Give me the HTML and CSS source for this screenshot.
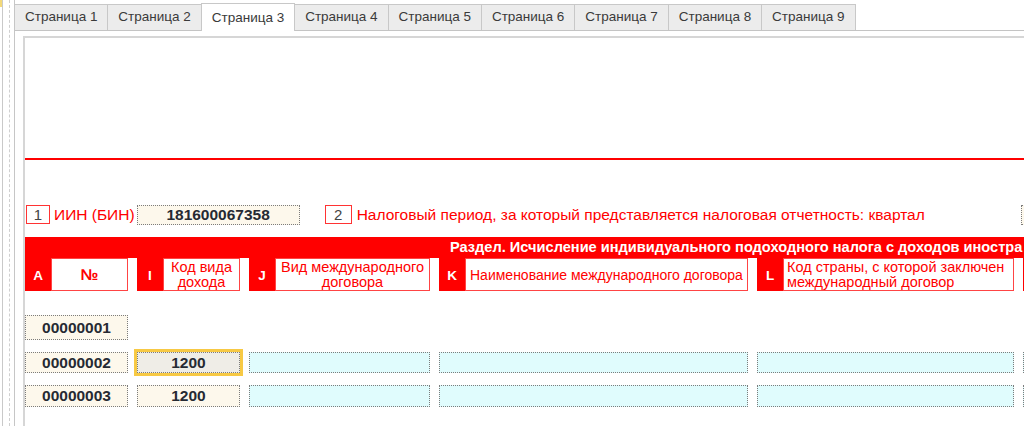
FILE: index.html
```html
<!DOCTYPE html>
<html lang="ru">
	<head>
		<meta charset="UTF-8">
		<meta name="viewport" content="width=device-width, initial-scale=1.0">
		<title>Страница 3</title>
		<link rel="stylesheet" href="styles.css">
	</head>
	<body>
		<div class="screen">
			<!-- левая полоса -->
			<div class="gutter">
				<div class="gutter-rule"><span class="gutter-mark"></span></div>
				<div class="gutter-dash"></div>
			</div>

			<div class="panel">
				<!-- вкладки -->
				<div class="tabs">
					<div class="tab">Страница 1</div>
					<div class="tab">Страница 2</div>
					<div class="tab tab-active">Страница 3</div>
					<div class="tab">Страница 4</div>
					<div class="tab">Страница 5</div>
					<div class="tab">Страница 6</div>
					<div class="tab">Страница 7</div>
					<div class="tab">Страница 8</div>
					<div class="tab">Страница 9</div>
				</div>

				<div class="page">
					<div class="sheet">
						<div class="sheet-head"></div>

						<div class="fields">
							<div class="num-box">1</div>
							<div class="caption">ИИН (БИН)</div>
							<div class="field field-iin">181600067358</div>
							<div class="num-box num-box-2">2</div>
							<div class="caption caption-period">Налоговый период, за который представляется налоговая отчетность: квартал</div>
							<div class="field field-stub"></div>
						</div>

						<!-- раздел -->
						<div class="band">
							<div class="band-title">Раздел. Исчисление индивидуального подоходного налога с доходов иностра</div>
							<div class="grid cols">
								<div class="col">
									<div class="letter">A</div>
									<div class="col-box col-bold">№</div>
								</div>
								<div class="col">
									<div class="letter">I</div>
									<div class="col-box">Код вида дохода</div>
								</div>
								<div class="col">
									<div class="letter">J</div>
									<div class="col-box">Вид международного договора</div>
								</div>
								<div class="col">
									<div class="letter">K</div>
									<div class="col-box col-left col-line">Наименование международного договора</div>
								</div>
								<div class="col">
									<div class="letter">L</div>
									<div class="col-box col-left">Код страны, с которой заключен международный договор</div>
								</div>
								<div class="col">
									<div class="letter"></div>
									<div class="col-box"></div>
								</div>
							</div>
						</div>

						<!-- строки -->
						<div class="grid row row-first">
							<div class="field">00000001</div>
						</div>
						<div class="grid row">
							<div class="field">00000002</div>
							<div class="field field-focus">1200</div>
							<div class="field field-cyan"></div>
							<div class="field field-cyan"></div>
							<div class="field field-cyan"></div>
							<div class="field field-cyan"></div>
						</div>
						<div class="grid row row-last">
							<div class="field">00000003</div>
							<div class="field">1200</div>
							<div class="field field-cyan"></div>
							<div class="field field-cyan"></div>
							<div class="field field-cyan"></div>
							<div class="field field-cyan"></div>
						</div>
					</div>
				</div>
			</div>
		</div>
	</body>
</html>
```

FILE: styles.css
```css
* {
	margin: 0;
	padding: 0;
	box-sizing: border-box;
}

html,
body {
	width: 1024px;
	height: 426px;
	overflow: hidden;
	background: #fff;
}

body {
	font-family: "Liberation Sans", Arial, sans-serif;
	color: #333;
}

.screen {
	display: flex;
	height: 426px;
}

/* левая полоса */
.gutter {
	width: 14px;
	flex: none;
	display: flex;
}

.gutter-rule {
	width: 3px;
	border-right: 1px solid #c9c9c9;
}

.gutter-mark {
	display: block;
	height: 7px;
	background: #f3d97a;
}

.gutter-dash {
	margin-left: 6px;
	border-left: 1px dashed #cfcfcf;
}

/* панель со вкладками */
.panel {
	flex: 1;
	min-width: 0;
	border-left: 1px solid #c6c6c6;
	overflow: hidden;
}

.tabs {
	display: flex;
	padding-top: 4px;
	border-bottom: 1px solid #c4c4c4;
}

.tab {
	width: 94.4px;
	height: 26px;
	margin-left: -1px;
	flex: none;
	border: 1px solid #c8c8c8;
	border-bottom: 0;
	background: #ececec;
	font-size: 13.5px;
	line-height: 24px;
	text-align: center;
	color: #3a3a3a;
}

.tab-active {
	position: relative;
	z-index: 1;
	height: 28px;
	margin-top: -1px;
	margin-bottom: -1px;
	background: #fff;
	line-height: 27px;
}

.page {
	padding: 5px 0 0 8px;
}

.sheet {
	width: 1200px;
	height: 400px;
	border-top: 2px solid #d6d6d6;
	border-left: 2px solid #d6d6d6;
}

.sheet-head {
	height: 122px;
	border-bottom: 2px solid #f00;
}

/* поля */
.fields {
	display: flex;
	align-items: center;
	width: 1046px;
	height: 21px;
	margin-top: 44px;
	padding-left: 1px;
}

.num-box {
	width: 24px;
	height: 19px;
	border: 1px solid #f33;
	font-size: 15px;
	line-height: 17px;
	text-align: center;
	color: #444;
}

.num-box-2 {
	width: 27px;
	margin-left: 25px;
}

.caption {
	margin-left: 4px;
	font-size: 15.5px;
	color: #f00;
	white-space: nowrap;
}

.caption-period {
	margin-left: 5px;
}

.field {
	height: 100%;
	border: 1px dotted #7c7c7c;
	background: #fdf8ec;
	font-size: 15.5px;
	font-weight: bold;
	text-align: center;
	color: #262a33;
	display: flex;
	align-items: center;
	justify-content: center;
}

.field-iin {
	width: 163px;
	height: 20px;
	margin-left: 2px;
}

.field-stub {
	width: 50px;
	height: 20px;
	margin-left: auto;
}

.field-cyan {
	background: #e0fcfd;
}

.field-focus {
	background: #efede7;
	box-shadow: 0 0 0 3px #f7c944;
}

/* раздел */
.band {
	margin-top: 12px;
}

.band-title {
	height: 21px;
	padding-left: 425px;
	background: #f00;
	color: #fff;
	font-size: 14.6px;
	font-weight: bold;
	line-height: 21px;
	white-space: nowrap;
}

.grid {
	display: grid;
	grid-template-columns: 103px 103px 181px 309px 257px 200px;
	column-gap: 9px;
}

.cols {
	height: 33px;
}

.col {
	display: flex;
}

.letter {
	width: 26px;
	flex: none;
	background: #f00;
	color: #fff;
	font-size: 13.5px;
	font-weight: bold;
	display: flex;
	align-items: center;
	justify-content: center;
	padding-top: 2px;
}

.col-box {
	flex: 1;
	border: 1px solid #f44;
	background: #fff;
	color: #f00;
	font-size: 14.5px;
	line-height: 15px;
	text-align: center;
	display: flex;
	align-items: center;
	justify-content: center;
	padding: 0 3px;
}

.col-bold {
	font-weight: bold;
	font-size: 16px;
}

.col-left {
	justify-content: flex-start;
	text-align: left;
}

.col-line {
	white-space: nowrap;
	font-size: 14px;
	padding-left: 4px;
	padding-top: 2px;
}

/* строки */
.row {
	height: 21px;
	margin-top: 12px;
}

.row-first {
	height: 25px;
	margin-top: 24px;
}

.row-last {
	height: 22px;
}
```
